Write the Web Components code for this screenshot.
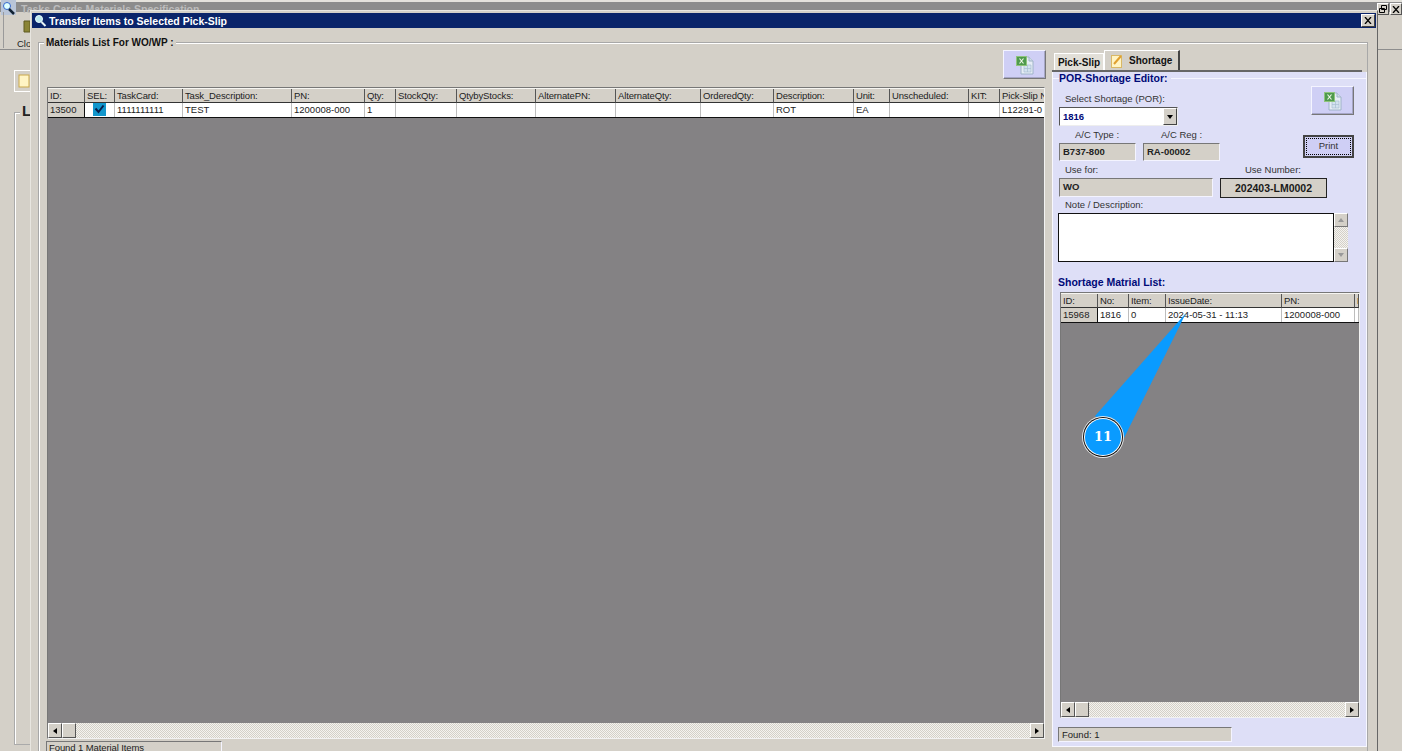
<!DOCTYPE html>
<html><head><meta charset="utf-8">
<style>
html,body{margin:0;height:751px;overflow:hidden;background:#d4d0c8;font:9.5px "Liberation Sans",Arial,sans-serif;color:#222}
</style></head><body>
<bg-window></bg-window>
<transfer-dialog></transfer-dialog>
<callout-pin></callout-pin>
<script>
const XL=`<svg width="22" height="22" viewBox="0 0 22 22"><path d="M7 3h8l4 4v13H7z" fill="#e6edf5" stroke="#9fb4c8"/><path d="M15 3v4h4" fill="#cfdbe8" stroke="#9fb4c8"/><path d="M10 11h7v7h-7z" fill="#d3e2ef" stroke="#a9bfd3" stroke-width=".7"/><path d="M13.5 11v7M10 14.500h7" stroke="#a9bfd3" stroke-width=".7"/><rect x="2.500" y="2.500" width="10" height="9" fill="#4f9a4d" stroke="#8fc47c"/><path d="M5.500 4.500l4 5M9.500 4.500l-4 5" stroke="#eef6e6" stroke-width="1.200"/></svg>`;
const SCROLLTRACK=`background:repeating-conic-gradient(#d4d0c8 0 25%,#f4f3ef 0 50%) 0 0/2px 2px;`;
const BOLD=`"Liberation Sans",Arial,sans-serif`;
function def(name,css,html){customElements.define(name,class extends HTMLElement{connectedCallback(){if(this.shadowRoot)return;const r=this.attachShadow({mode:'open'});r.innerHTML=`<style>${css}</style>${typeof html==='function'?html(this):html}`;}})}

def('excel-btn',`:host{display:flex;align-items:center;justify-content:center;width:43px;height:29px;box-sizing:border-box;background:#cfcff5;border:1px solid;border-color:#f4f4ff #777 #777 #f4f4ff;box-shadow:inset -1px -1px 0 #a6a6c6}`,XL);

def('scroll-bar',`:host{display:flex;height:15px;flex:none;align-items:stretch;${SCROLLTRACK}}
.b{width:14px;box-sizing:border-box;background:#d4d0c8;border:1px solid;border-color:#fff #555 #555 #fff;display:flex;align-items:center;justify-content:center}
.t{width:14px}.s{flex:1}.a{width:0;height:0;border:3.500px solid transparent}
.l{border-right:4px solid #000;border-left:0}.r{border-left:4px solid #000;border-right:0}`,
`<div class="b"><i class="a l"></i></div><div class="b t"></div><div class="s"></div><div class="b"><i class="a r"></i></div>`);

def('data-grid',`:host{display:flex;flex-direction:column;box-sizing:border-box;background:#848284;border:1px solid;border-color:#777 #f2f2f2 #f2f2f2 #777;overflow:hidden;color:#222}
.r{display:grid;flex:none;background:#d4d0c8;box-sizing:border-box}
.h div,.d div{box-sizing:border-box;padding-left:2px;white-space:nowrap;overflow:hidden;line-height:14px}
.h{height:15px;border-top:1px solid #f6f5f1;letter-spacing:-.14px}
.h div{border-right:1px solid #555;border-bottom:1px solid #333;height:14px;line-height:13px}
.d{height:15px;border-bottom:1px solid #111;background:#fff}
.d div{border-right:1px solid #bdbdbd;background:#fff;height:14px}
.d div:first-child{background:#d4d0c8;border-right-color:#111}
.f{flex:1}
.c{display:flex;justify-content:center;padding:0!important}`,
el=>{const cols=el.getAttribute('cols');const hs=el.getAttribute('heads').split('|');const ds=el.getAttribute('cells').split('|');
const ck=`<svg width="13" height="13" viewBox="0 0 13 13"><rect width="13" height="13" fill="#1296cc"/><path d="M2.500 5.500l3 3.500 5-6.500" fill="none" stroke="#071d4a" stroke-width="2"/></svg>`;
return `<div class="r h" style="grid-template-columns:${cols}">${hs.map(x=>`<div>${x}</div>`).join('')}</div>
<div class="r d" style="grid-template-columns:${cols}">${ds.map(x=>x==='[x]'?`<div class="c">${ck}</div>`:`<div>${x}</div>`).join('')}</div>
<div class="f"></div><scroll-bar></scroll-bar>`});

def('title-bar',`:host{display:flex;align-items:center;height:15px;background:#0a246a;color:#fff;font:bold 10.5px ${BOLD};padding:0 1px 0 2px;gap:2px}
.g{flex:1;white-space:nowrap}
.x{width:14px;height:13px;box-sizing:border-box;background:#d4d0c8;border:1px solid;border-color:#fff #404040 #404040 #fff;color:#000;display:flex;align-items:center;justify-content:center}`,
`<svg width="13" height="14" viewBox="0 0 13 14"><circle cx="5" cy="5" r="3.500" fill="#bfe9ee" stroke="#e8fbff"/><path d="M7.500 8l4 4" stroke="#e8f4f6" stroke-width="2"/></svg><span class="g"><slot></slot></span>
<span class="x"><svg width="8" height="7" viewBox="0 0 8 7"><path d="M1 0l6 7M7 0L1 7" stroke="#000" stroke-width="1.300"/></svg></span>`);

def('bg-window',`:host{position:absolute;left:0;top:0;width:1402px;height:751px;background:#d4d0c8;display:block;overflow:hidden}
.top{height:12px;border-top:2px solid #e4e2dc;box-sizing:border-box;background:#8c8c8c;color:#bdbdbd;font:bold 10.5px "Liberation Sans",sans-serif;display:flex;gap:5px;padding-left:1px;line-height:14px;white-space:nowrap}
.bar{display:flex;height:38px;border-bottom:1px solid #8d8d8d;box-sizing:border-box;padding-left:3px;position:relative}
.tb{border-left:1px solid #9a9a9a;padding:26px 0 0 13px;font-size:9.500px;height:10px}
.ic{position:absolute;left:23px;top:8px}
.btns{position:absolute;right:0;top:-9px;display:flex;gap:1px}
.btns span{width:12px;height:12px;box-sizing:border-box;background:#d4d0c8;border:1px solid;border-color:#fff #555 #555 #fff;display:flex;align-items:center;justify-content:center}
.tab{margin:20px 0 0 14px;width:30px;height:22px;box-sizing:border-box;border:1px solid #fff;border-right-color:#888;padding:3px 3px}
.grp{margin:20px 0 0 14px;height:633px;width:30px;box-sizing:border-box;border:1px solid #aaa;border-right:0;box-shadow:inset 1px 1px 0 #fff}
.grp b{font:bold 15px "Liberation Sans",sans-serif;position:relative;top:-11px;left:5px;background:#d4d0c8;padding:0 2px}`,
`<div class="top"><svg width="15" height="15" viewBox="0 0 15 15" style="margin-top:-2px"><rect width="15" height="15" fill="#b9c5d8"/><circle cx="6" cy="6" r="3.500" fill="#dff" stroke="#36c"/><path d="M8 9l5 5" stroke="#123" stroke-width="2.500"/></svg><span>Tasks Cards Materials Specification</span></div>
<div class="bar"><div class="tb">Clo</div><svg class="ic" width="8" height="13"><path d="M1 1h6v11H1z" fill="#8a8436" stroke="#5e5a20"/></svg>
<span class="btns"><span><svg width="8" height="8" viewBox="0 0 8 8"><path d="M2.500.5h5v4h-5zM.5 3.500h5v4h-5z" fill="#d4d0c8" stroke="#000"/></svg></span><span><svg width="8" height="7" viewBox="0 0 8 7"><path d="M1 0l6 7M7 0L1 7" stroke="#000" stroke-width="1.300"/></svg></span></span></div>
<div class="tab"><svg width="12" height="14"><rect x="1" y="1" width="10" height="12" fill="#fff4c4" stroke="#c9a84c"/></svg></div>
<div class="grp"><b>L</b></div>`);

def('field-box',`:host{display:block;box-sizing:border-box;height:19px;background:#d4d0c8;border:1px solid;border-color:#777 #f4f4ff #f4f4ff #777;font:bold 9.5px/16px ${BOLD};padding-left:3px;color:#222;white-space:nowrap;overflow:hidden}`,`<slot></slot>`);

def('shortage-panel',`:host{display:flex;flex-direction:column;width:316px;color:#222}
.tabs{display:flex;align-items:flex-end;height:22px;flex:none;padding-left:2px;border-bottom:2px solid #666;margin-right:5px;box-sizing:border-box}
.t{font:bold 10px/17px ${BOLD};height:17px;box-sizing:border-box;background:#e2dfd8;border:1px solid #fff;border-bottom:0;width:50px;text-align:center;white-space:nowrap;color:#111}
.t.on{width:76px;height:20px;background:#d4d0c8;border-right:2px solid #444;display:flex;align-items:center;gap:6px;padding-left:6px;text-align:left}
.pane{flex:1;background:#dedff7;border:1px solid #f8f8ff;border-top:0;box-sizing:border-box;padding:0 0 0 6px;display:flex;flex-direction:column}
.leg{font:bold 10.5px/12px ${BOLD};color:#000a78;white-space:nowrap;flex:none}
.lg1{display:flex;align-items:center;gap:3px;margin-left:-6px}.lg1::before{content:"";width:6px;margin-right:-3px;border-top:1px solid #f5f5ff}.lg1::after{content:"";flex:1;border-top:1px solid #f5f5ff}
.row{display:flex;flex:none}
.lb{line-height:12px;white-space:nowrap;font-size:9.500px;color:#333}
.top{display:flex;justify-content:space-between;padding-right:12px;height:42px;flex:none}
.combo{width:119px;height:19px;box-sizing:border-box;background:#fff;border:1px solid;border-color:#555 #eee #eee #555;display:flex;justify-content:space-between;font:bold 9.5px/17px ${BOLD};color:#000a78;padding-left:3px;margin-top:2px}
.arr{width:14px;background:#d4d0c8;border:1px solid;border-color:#fff #444 #444 #fff;box-sizing:border-box;display:flex;align-items:center;justify-content:center}
.arr i{border:3.500px solid transparent;border-top:4px solid #000;border-bottom:0}
.btn{width:51px;height:23px;box-sizing:border-box;background:#cfcff5;border:2px solid #444;outline:1px dotted #000;outline-offset:-4px;text-align:center;line-height:18px;font-size:9.500px;color:#333}
.note{display:flex;height:49px;margin:2px 0 0 -1px;width:290px;flex:none}
.area{flex:1;background:#fff;border:1px solid #111;box-sizing:border-box}
.vs{width:14px;display:flex;flex-direction:column;justify-content:space-between;${SCROLLTRACK}}
.vb{height:14px;background:#d4d0c8;border:1px solid;border-color:#fff #777 #777 #fff;box-sizing:border-box;display:flex;align-items:center;justify-content:center}
.up{border:3.500px solid transparent;border-bottom:4px solid #999;border-top:0}.dn{border:3.500px solid transparent;border-top:4px solid #999;border-bottom:0}
.num{width:107px;height:20px;box-sizing:border-box;border:1px solid #222;background:#d4d0c8;font:bold 10.5px/18px ${BOLD};text-align:center;white-space:nowrap;color:#1a1a1a}
.found{width:174px;height:15px;box-sizing:border-box;background:#d4d0c8;border:1px solid;border-color:#777 #f4f4ff #f4f4ff #777;padding-left:3px;line-height:13px;margin:9px 0 0 -1px;flex:none}
data-grid{width:300px;height:426px;margin:4px 0 0 1px;flex:none}`,
`<div class="tabs"><div class="t">Pick-Slip</div><div class="t on"><svg width="12" height="14" viewBox="0 0 12 14"><rect x=".5" y="1.500" width="10" height="12" fill="#fff4c4" stroke="#d9b866"/><path d="M3 10l7-8" stroke="#e0a030" stroke-width="2"/></svg>Shortage</div></div>
<div class="pane">
<div class="leg lg1">POR-Shortage Editor:</div>
<div class="top"><div style="padding-top:9px"><div class="lb" style="margin-left:6px">Select Shortage (POR):</div><div class="combo">1816<span class="arr"><i></i></span></div></div><excel-btn style="margin-top:2px"></excel-btn></div>
<div class="row" style="justify-content:space-between;padding-right:12px;margin-top:3px">
 <div><div class="row"><span class="lb" style="margin:0 0 0 16px;width:86px">A/C Type :</span><span class="lb">A/C Reg :</span></div>
 <div class="row" style="gap:7px;margin-top:2px"><field-box style="width:77px;height:18px">B737-800</field-box><field-box style="width:77px;height:18px">RA-00002</field-box></div></div>
 <div class="btn" style="margin-top:6px">Print</div></div>
<div class="row" style="margin-top:3px"><span class="lb" style="margin-left:6px;width:180px">Use for:</span><span class="lb">Use Number:</span></div>
<div class="row" style="gap:7px;margin-top:2px"><field-box style="width:154px">WO</field-box><div class="num">202403-LM0002</div></div>
<div class="lb" style="margin:1px 0 0 6px;flex:none">Note / Description:</div>
<div class="note"><div class="area"></div><div class="vs"><div class="vb"><i class="up"></i></div><div class="vb"><i class="dn"></i></div></div></div>
<div class="leg" style="margin:14px 0 0 -1px">Shortage Matrial List:</div>
<data-grid cols="37px 31px 37px 116px 73px 4px" heads="ID:|No:|Item:|IssueDate:|PN:|P" cells="15968|1816|0|2024-05-31 - 11:13|1200008-000|"></data-grid>
<div class="found">Found: 1</div>
</div>`);

def('transfer-dialog',`:host{position:absolute;left:30px;top:10px;width:1348px;height:760px;box-sizing:border-box;background:#d4d0c8;border:1px solid;border-color:#e8e6e0 #666 #666 #e8e6e0;padding:2px 1px 0 1px;display:block}
.g{margin:14px 8px 0 6px;height:720px;border:1px solid #a8a8a8;box-shadow:inset 1px 1px 0 #fff;position:relative;display:flex;padding-left:8px}
.lg{position:absolute;left:5px;top:-7px;background:#d4d0c8;padding:0 2px;font:bold 10px/13px ${BOLD};color:#111;white-space:nowrap}
.l{width:998px;display:flex;flex-direction:column}
.tool{display:flex;justify-content:flex-end;padding-top:7px;height:37px;flex:none;margin-right:-1px;box-sizing:content-box}
data-grid{height:652px;flex:none}
.st{height:15px;width:176px;box-sizing:border-box;margin-top:2px;border:1px solid;border-color:#777 #f4f4ff #f4f4ff #777;padding-left:2px;line-height:12px;margin-left:-1px;letter-spacing:-.1px;flex:none}
shortage-panel{margin-left:7px;height:697px;margin-top:7px}`,
`<title-bar>Transfer Items to Selected Pick-Slip</title-bar>
<div class="g"><span class="lg">Materials List For WO/WP :</span>
<div class="l"><div class="tool"><excel-btn></excel-btn></div>
<data-grid cols="37px 30px 68px 109px 73px 31px 61px 79px 80px 85px 73px 80px 36px 79px 31px 46px"
 heads="ID:|SEL:|TaskCard:|Task_Description:|PN:|Qty:|StockQty:|QtybyStocks:|AlternatePN:|AlternateQty:|OrderedQty:|Description:|Unit:|Unscheduled:|KIT:|Pick-Slip N"
 cells="13500|[x]|1111111111|TEST|1200008-000|1||||||ROT|EA|||L12291-0"></data-grid>
<div class="st">Found 1 Material Items</div></div>
<shortage-panel></shortage-panel></div>`);

def('callout-pin',`:host{position:absolute;left:1075px;top:305px;width:120px;height:160px;display:block}
svg{position:absolute;inset:0}
.n{position:absolute;left:8px;top:124px;width:40px;text-align:center;font:bold 13px/16px "DejaVu Serif",serif;color:#fff}`,
`<svg width="120" height="160" viewBox="1075 305 120 160"><path d="M1186 313L1095 416 1124 438z" fill="#0a9bff"/><circle cx="1103" cy="437" r="21" fill="#e8e8e8"/><circle cx="1103" cy="437" r="20" fill="#111"/><circle cx="1103" cy="437" r="19" fill="#fff"/><circle cx="1103" cy="437" r="18" fill="#0a9bff"/></svg><div class="n">11</div>`);
</script>
</body></html>
